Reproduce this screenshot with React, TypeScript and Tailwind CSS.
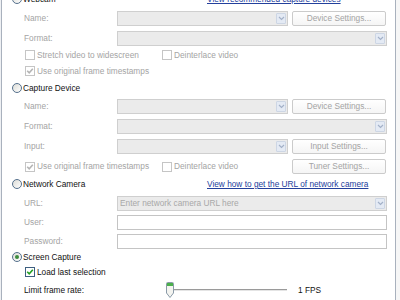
import React from "react";

const Chevron = ({ color }: { color: string }) => (
  <svg width="7" height="5" viewBox="0 0 7 5">
    <path d="M1 1 L3.5 3.5 L6 1" fill="none" stroke={color} strokeWidth="1.2" />
  </svg>
);

function Combo({ className, placeholder }: { className: string; placeholder?: string }) {
  return (
    <div className={`h-[15px] border border-[#cfcfcf] bg-[#ebebeb] flex items-stretch ${className}`}>
      <div className="flex-1 flex items-center pl-[2px] text-[#a8a8a8] whitespace-nowrap overflow-hidden">{placeholder}</div>
      <div className="m-[1px] w-[10px] bg-[#e4eaf4] border border-[#cdd6e4] rounded-[1px] flex items-center justify-center">
        <Chevron color="#a3b1c8" />
      </div>
    </div>
  );
}

function Button({ label }: { label: string }) {
  return (
    <div className="w-[94px] h-[15px] border border-[#cbcbcb] rounded-[2px] bg-gradient-to-b from-white to-[#f5f5f5] flex items-center justify-center text-[#a4a4a4]">
      {label}
    </div>
  );
}

function Radio({ label, checked }: { label: string; checked?: boolean }) {
  return (
    <div className="flex items-center gap-[1px]">
      <div className="w-[10px] h-[10px] rounded-full border border-[#55708c] bg-gradient-to-br from-[#dcdcd6] to-white flex items-center justify-center">
        {checked && <div className="w-[4px] h-[4px] rounded-full bg-[#3c8c3c]" />}
      </div>
      <span className="text-[#111]">{label}</span>
    </div>
  );
}

function Check({ label, checked, enabled }: { label: string; checked?: boolean; enabled?: boolean }) {
  return (
    <div className="flex items-center gap-[2px]">
      <div
        className={`w-[10px] h-[10px] border bg-white flex items-center justify-center ${
          enabled ? "border-[#3d5f80]" : "border-[#c5c5c5]"
        }`}
      >
        {checked && (
          <svg width="8" height="8" viewBox="0 0 8 8">
            <path
              d="M1.2 3.8 L3.2 5.8 L6.8 1.8"
              fill="none"
              stroke={enabled ? "#22a022" : "#b4b4b4"}
              strokeWidth="1.6"
            />
          </svg>
        )}
      </div>
      <span className={enabled ? "text-[#111]" : "text-[#a4a4a4]"}>{label}</span>
    </div>
  );
}

function Label({ text }: { text: string }) {
  return <span className="w-[115px] shrink-0 pl-[22px] text-[#a4a4a4]">{text}</span>;
}

export default function App() {
  return (
    <div className="w-[400px] h-[300px] overflow-hidden bg-white flex [font-family:'Liberation_Sans',Arial,sans-serif] text-[8.3px] leading-none">
      <div className="w-[1px] bg-[#eef0f3]" />
      <div className="w-[1px] bg-[#a9b1bd]" />
      <div className="w-[393px] flex flex-col -mt-[8px]">
        {/* Webcam */}
        <div className="flex items-center h-[14px] pl-[10px]">
          <div className="w-[195px]">
            <Radio label="Webcam" />
          </div>
          <span className="text-[#23409c] underline">View recommended capture devices</span>
        </div>
        <div className="flex items-center h-[15px] mt-[5px]">
          <Label text="Name:" />
          <Combo className="w-[171px]" />
          <div className="w-[4px]" />
          <Button label="Device Settings..." />
        </div>
        <div className="flex items-center h-[15px] mt-[5px]">
          <Label text="Format:" />
          <Combo className="w-[270px]" />
        </div>
        <div className="flex items-center h-[12px] mt-[3px] pl-[23px]">
          <div className="w-[137px]">
            <Check label="Stretch video to widescreen" />
          </div>
          <Check label="Deinterlace video" />
        </div>
        <div className="flex items-center h-[12px] mt-[4px] pl-[23px]">
          <Check label="Use original frame timestamps" checked />
        </div>

        {/* Capture Device */}
        <div className="flex items-center h-[14px] mt-[4px] pl-[10px]">
          <Radio label="Capture Device" />
        </div>
        <div className="flex items-center h-[15px] mt-[4px]">
          <Label text="Name:" />
          <Combo className="w-[171px]" />
          <div className="w-[4px]" />
          <Button label="Device Settings..." />
        </div>
        <div className="flex items-center h-[15px] mt-[5px]">
          <Label text="Format:" />
          <Combo className="w-[270px]" />
        </div>
        <div className="flex items-center h-[15px] mt-[5px]">
          <Label text="Input:" />
          <Combo className="w-[171px]" />
          <div className="w-[4px]" />
          <Button label="Input Settings..." />
        </div>
        <div className="flex items-center h-[15px] mt-[5px] pl-[23px]">
          <div className="w-[137px]">
            <Check label="Use original frame timestamps" checked />
          </div>
          <div className="w-[130px]">
            <Check label="Deinterlace video" />
          </div>
          <Button label="Tuner Settings..." />
        </div>

        {/* Network Camera */}
        <div className="flex items-center h-[14px] mt-[3px] pl-[10px]">
          <div className="w-[195px]">
            <Radio label="Network Camera" />
          </div>
          <span className="text-[#23409c] underline">View how to get the URL of network camera</span>
        </div>
        <div className="flex items-center h-[15px] mt-[5px]">
          <Label text="URL:" />
          <Combo className="w-[270px]" placeholder="Enter network camera URL here" />
        </div>
        <div className="flex items-center h-[15px] mt-[4px]">
          <Label text="User:" />
          <div className="w-[270px] h-[15px] border border-[#c4c4c4] bg-white" />
        </div>
        <div className="flex items-center h-[15px] mt-[4px]">
          <Label text="Password:" />
          <div className="w-[270px] h-[15px] border border-[#c4c4c4] bg-white" />
        </div>

        {/* Screen Capture */}
        <div className="flex items-center h-[14px] mt-[1px] pl-[10px]">
          <Radio label="Screen Capture" checked />
        </div>
        <div className="flex items-center h-[12px] mt-[2px] pl-[23px]">
          <Check label="Load last selection" checked enabled />
        </div>
        <div className="flex items-center h-[16px] mt-[4px]">
          <span className="w-[164px] shrink-0 pl-[22px] text-[#111]">Limit frame rate:</span>
          <svg width="8" height="16" viewBox="0 0 8 16" className="shrink-0">
            <path d="M0.5 1.5 Q0.5 0.5 1.5 0.5 H6.5 Q7.5 0.5 7.5 1.5 V11 L4 15.5 L0.5 11 Z" fill="#f4f4f0" stroke="#8a9aa8" />
            <rect x="1" y="1" width="6" height="3" fill="#4cb04c" />
          </svg>
          <div className="w-[113px] flex flex-col">
            <div className="h-[1px] bg-[#9a9a9a]" />
            <div className="h-[1px] bg-[#e4e4e4]" />
          </div>
          <span className="ml-[11px] text-[#111]">1 FPS</span>
        </div>
      </div>
      <div className="w-[1px] bg-[#a9b1bd]" />
      <div className="flex-1 bg-[#f6f6f6]" />
    </div>
  );
}
